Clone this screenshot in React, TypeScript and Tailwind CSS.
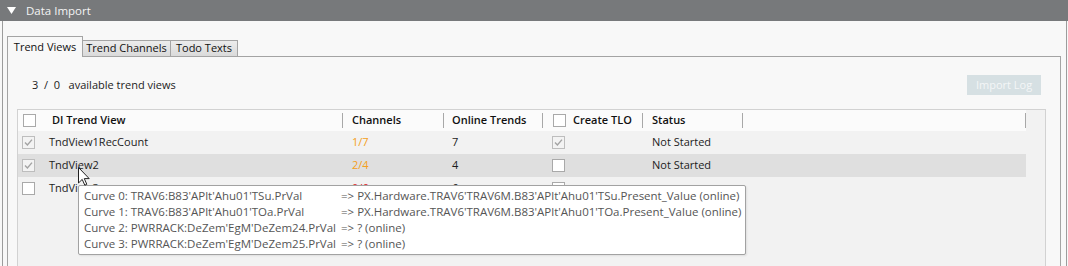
import React from 'react';

interface TrendView {
  name: string;
  selected: boolean;
  channels: string;
  channelColor: string;
  online: string;
  createTlo: boolean;
  createDisabled: boolean;
  status: string;
  hover?: boolean;
}

const views: TrendView[] = [
  { name: 'TndView1RecCount', selected: true, channels: '1/7', channelColor: 'text-[#f4a020]', online: '7', createTlo: true, createDisabled: true, status: 'Not Started' },
  { name: 'TndView2', selected: true, channels: '2/4', channelColor: 'text-[#f4a020]', online: '4', createTlo: false, createDisabled: false, status: 'Not Started', hover: true },
  { name: 'TndView3', selected: false, channels: '0/6', channelColor: 'text-[#e02828]', online: '6', createTlo: false, createDisabled: false, status: '' },
];

const curves = [
  ["Curve 0: TRAV6:B83'APlt'Ahu01'TSu.PrVal", "=> PX.Hardware.TRAV6'TRAV6M.B83'APlt'Ahu01'TSu.Present_Value (online)"],
  ["Curve 1: TRAV6:B83'APlt'Ahu01'TOa.PrVal", "=> PX.Hardware.TRAV6'TRAV6M.B83'APlt'Ahu01'TOa.Present_Value (online)"],
  ["Curve 2: PWRRACK:DeZem'EgM'DeZem24.PrVal", '=> ? (online)'],
  ["Curve 3: PWRRACK:DeZem'EgM'DeZem25.PrVal", '=> ? (online)'],
];

const CheckBox = ({ checked, disabled }: { checked: boolean; disabled?: boolean }) => (
  <div
    className={`w-[13px] h-[13px] border flex items-center justify-center shrink-0 ${
      disabled ? 'border-[#bdbdbd] bg-[#f3f3f3]' : 'border-[#a9a9a9] bg-white'
    }`}
  >
    {checked && (
      <svg width="9" height="9" viewBox="0 0 9 9">
        <path d="M1 4.6 L3.4 7 L8 1.6" stroke="#a3a3a3" strokeWidth="1.4" fill="none" />
      </svg>
    )}
  </div>
);

const Sep = () => <div className="w-px h-[15px] bg-[#a8a8a8] shrink-0" />;

const App = () => {
  return (
    <div className="relative w-[1068px] h-[266px] overflow-hidden bg-[#f8f8f8] font-['Open_Sans',sans-serif] text-[11px] text-[#1c1c1c]">
      {/* Section header */}
      <div className="h-[21px] bg-[#77797b] flex items-center pl-[7px] text-[#f4f4f4] text-[11.5px]">
        <svg width="9" height="7" viewBox="0 0 9 7" className="mr-[10px]">
          <path d="M0 0 H9 L4.5 7 Z" fill="#fff" />
        </svg>
        Data Import
      </div>

      {/* Body frame */}
      <div className="ml-[2px] w-[1065px] h-[245px] border-l border-r border-[#9c9c9c] pl-[4px] pt-[15px]">
        {/* Tabs */}
        <div className="flex items-end h-[20px] whitespace-nowrap">
          <div className="relative z-10 -mb-px w-[76px] h-[21px] border border-b-0 border-[#a4a4a4] bg-[#f8f8f8] flex items-center justify-center text-[#111]">
            Trend Views
          </div>
          <div className="-ml-px -mb-px w-[89px] h-[17px] border border-[#a4a4a4] bg-gradient-to-b from-[#ececec] to-[#dadada] flex items-center justify-center text-[#111]">
            Trend Channels
          </div>
          <div className="-ml-px -mb-px w-[68px] h-[17px] border border-[#a4a4a4] bg-gradient-to-b from-[#ececec] to-[#dadada] flex items-center justify-center text-[#111]">
            Todo Texts
          </div>
        </div>

        {/* Tab panel */}
        <div className="w-[1054px] h-[220px] border border-b-0 border-[#a4a4a4] pl-[9px] pt-[18px]">
          <div className="w-[1029px] h-[20px] flex items-center justify-between">
            <span className="pl-[15px] whitespace-pre">3  /  0   available trend views</span>
            <div className="mr-[5px] w-[74px] h-[20px] bg-[#d6e0e3] text-[#f4f6f7] flex items-center justify-center">
              Import Log
            </div>
          </div>

          {/* Table */}
          <div className="mt-[14px] w-[1029px] h-[160px] border border-b-0 border-[#d2d2d2] bg-[#f2f2f2]">
            {/* Header */}
            <div className="w-[1008px] h-[21px] bg-[#fbfbfb] flex items-center font-semibold text-[#111]">
              <div className="w-[324px] flex items-center pl-[5px]">
                <CheckBox checked={false} />
                <span className="ml-[16px]">DI Trend View</span>
              </div>
              <div className="w-[101px] flex items-center">
                <Sep />
                <span className="ml-[9px]">Channels</span>
              </div>
              <div className="w-[99px] flex items-center">
                <Sep />
                <span className="ml-[8px]">Online Trends</span>
              </div>
              <div className="w-[100px] flex items-center">
                <Sep />
                <div className="ml-[10px]">
                  <CheckBox checked={false} />
                </div>
                <span className="ml-[7px]">Create TLO</span>
              </div>
              <div className="w-[100px] flex items-center">
                <Sep />
                <span className="ml-[9px]">Status</span>
              </div>
              <div className="w-[283px] flex items-center">
                <Sep />
              </div>
              <Sep />
            </div>

            {/* Rows */}
            {views.map((v) => (
              <div
                key={v.name}
                className={`w-[1008px] h-[23px] flex items-center ${v.hover ? 'bg-[#dfdfdf]' : ''}`}
              >
                <div className="w-[324px] flex items-center pl-[4px]">
                  <CheckBox checked={v.selected} disabled={v.selected} />
                  <span className="ml-[14px]">{v.name}</span>
                </div>
                <div className={`w-[101px] pl-[10px] ${v.channelColor}`}>{v.channels}</div>
                <div className="w-[99px] pl-[9px]">{v.online}</div>
                <div className="w-[100px] pl-[10px]">
                  <CheckBox checked={v.createTlo} disabled={v.createDisabled} />
                </div>
                <div className="w-[100px] pl-[10px]">{v.status}</div>
              </div>
            ))}
          </div>
        </div>
      </div>

      {/* Tooltip */}
      <div className="absolute left-[78px] top-[185px] w-[668px] h-[70px] border border-[#a2a2a2] rounded-[2px] bg-white pl-[5px] pt-[2px] text-[#555] text-[11.5px] leading-[16px] shadow-[1px_1px_2px_rgba(0,0,0,0.08)]">
        <div className="grid grid-cols-[auto_auto] justify-start gap-x-[5px]">
          {curves.map(([a, b]) => (
            <React.Fragment key={a}>
              <span className="whitespace-nowrap">{a}</span>
              <span className="whitespace-nowrap">{b}</span>
            </React.Fragment>
          ))}
        </div>
      </div>

      {/* Mouse pointer */}
      <svg className="absolute left-[78px] top-[167px]" width="12" height="19" viewBox="0 0 12 19">
        <path d="M0.5 0.5 V16 L4.2 12.4 L6.8 18.2 L8.8 17.3 L6.3 11.6 H11.2 Z" fill="#fff" stroke="#222" strokeWidth="1" strokeLinejoin="miter" />
      </svg>
    </div>
  );
};

export default App;
